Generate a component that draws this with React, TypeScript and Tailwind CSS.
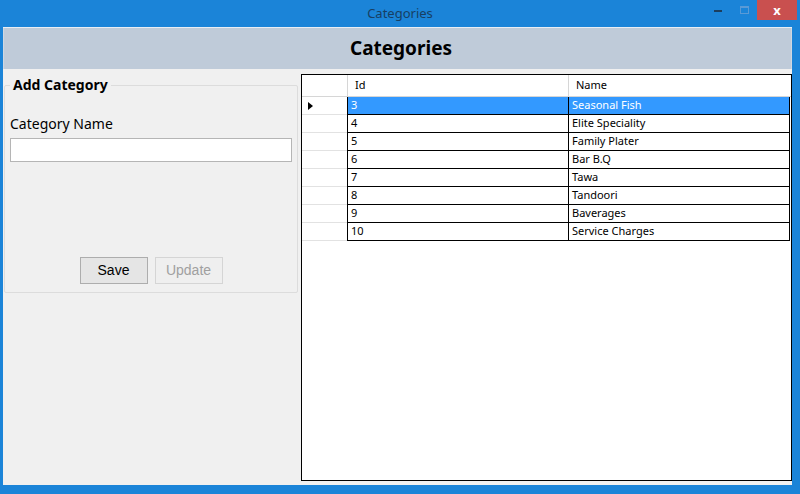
import React from "react";

const rows = [
  { id: "3", name: "Seasonal Fish" },
  { id: "4", name: "Elite Speciality" },
  { id: "5", name: "Family Plater" },
  { id: "6", name: "Bar B.Q" },
  { id: "7", name: "Tawa" },
  { id: "8", name: "Tandoori" },
  { id: "9", name: "Baverages" },
  { id: "10", name: "Service Charges" },
];

export default function App() {
  return (
    <div
      className="w-[800px] h-[494px] bg-[#1b84d8] flex flex-col overflow-hidden"
      style={{ fontFamily: '"Noto Sans", "Open Sans", sans-serif' }}
    >
      {/* title bar */}
      <div className="h-[27px] flex items-center relative shrink-0">
        <div className="flex-1 text-center text-[13px] text-[#173f63] pt-[1px]">Categories</div>
        <div className="absolute right-[3px] top-0 flex items-start">
          <div className="w-[26px] h-[20px] flex items-center justify-center">
            <div className="w-[8px] h-[2px] bg-[#1c3e5e] mt-[2px]" />
          </div>
          <div className="w-[26px] h-[20px] flex items-center justify-center">
            <div className="w-[9px] h-[8px] border border-[#5a9ad6] border-t-2" />
          </div>
          <div className="w-[40px] h-[20px] bg-[#c9504f] flex items-center justify-center text-white text-[13px] font-bold leading-none">
            x
          </div>
        </div>
      </div>

      {/* client area */}
      <div className="flex-1 ml-[3px] mr-[8px] mb-[9px] bg-[#f0f0f0] flex flex-col border-t border-[#e8eef4]">
        <div className="h-[41px] bg-[#bfcbd9] border-l border-r border-[#cfd8e2] flex items-center justify-center pl-[7px] shrink-0">
          <span className="text-[19px] font-bold text-black">Categories</span>
        </div>

        <div className="flex-1 flex pl-[1px] pt-[5px] pb-[4px] gap-[3px]">
          {/* left group */}
          <div className="w-[294px]">
            <fieldset className="border border-[#dcdcdc] rounded-[2px] mt-[1px] pl-[5px] pr-[5px] h-[218px] flex flex-col">
              <legend className="ml-0 px-[3px] text-[14px] font-bold text-black leading-[20px]">Add Category</legend>
              <div className="text-[14px] text-black mt-[20px] leading-[18px]">Category Name</div>
              <div className="mt-[5px] h-[24px] bg-white border border-[#b5b5b5]" />
              <div className="flex justify-center gap-[7px] mt-[95px]">
                <div
                  className="w-[68px] h-[27px] border border-[#adadad] bg-[#e5e5e5] flex items-center justify-center text-[14px] text-black"
                  style={{ fontFamily: '"Liberation Sans", Arial, sans-serif' }}
                >
                  Save
                </div>
                <div
                  className="w-[68px] h-[27px] border border-[#d5d5d5] bg-[#efefef] flex items-center justify-center text-[14px] text-[#a0a0a0]"
                  style={{ fontFamily: '"Liberation Sans", Arial, sans-serif' }}
                >
                  Update
                </div>
              </div>
            </fieldset>
          </div>

          {/* grid */}
          <div className="w-[491px] border border-black bg-white text-[11px] text-black">
            <div className="flex h-[22px] border-b border-[#d6d6d6]">
              <div className="w-[45px]" />
              <div className="w-[221px] border-l border-[#d6d6d6] pl-[7px] flex items-center">Id</div>
              <div className="flex-1 border-l border-[#d6d6d6] pl-[7px] flex items-center">Name</div>
            </div>
            {rows.map((r, i) => {
              const sel = i === 0;
              return (
                <div key={r.id} className="flex h-[18px]">
                  <div className="w-[45px] border-b border-[#e2e2e2] flex items-center pl-[6px]">
                    {sel && (
                      <svg width="5" height="8" viewBox="0 0 5 8">
                        <path d="M0 0 L5 4 L0 8 Z" fill="#000" />
                      </svg>
                    )}
                  </div>
                  <div
                    className={
                      "w-[221px] border-l border-b border-black pl-[3px] flex items-center " +
                      (sel ? "bg-[#3399ff] text-white" : "")
                    }
                  >
                    {r.id}
                  </div>
                  <div
                    className={
                      "w-[222px] border-l border-b border-r border-black pl-[3px] flex items-center " +
                      (sel ? "bg-[#3399ff] text-white" : "")
                    }
                  >
                    {r.name}
                  </div>
                </div>
              );
            })}
          </div>
        </div>
      </div>
    </div>
  );
}
